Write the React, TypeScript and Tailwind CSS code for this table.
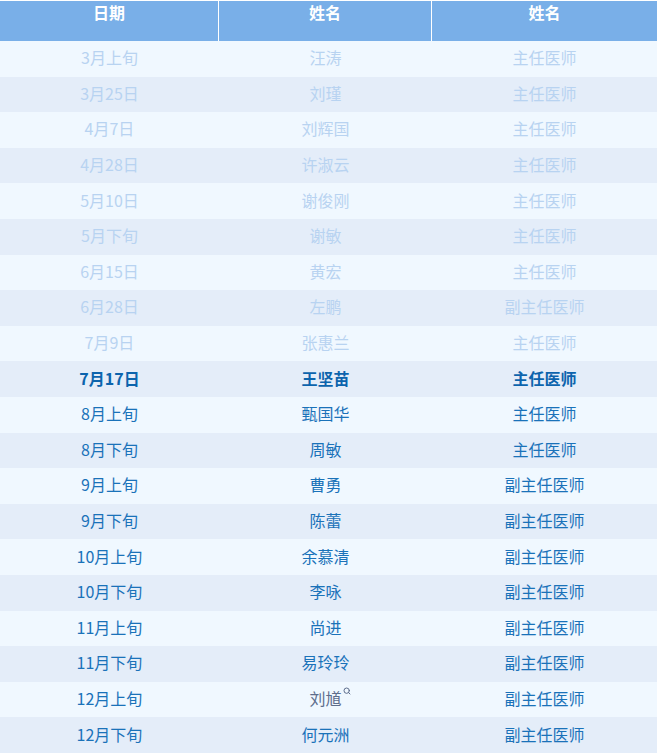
import { Search } from "lucide-react";

type Row = { date: string; name: string; title: string; state: "past" | "current" | "future" };

const rows: Row[] = [
  { date: "3月上旬", name: "汪涛", title: "主任医师", state: "past" },
  { date: "3月25日", name: "刘瑾", title: "主任医师", state: "past" },
  { date: "4月7日", name: "刘辉国", title: "主任医师", state: "past" },
  { date: "4月28日", name: "许淑云", title: "主任医师", state: "past" },
  { date: "5月10日", name: "谢俊刚", title: "主任医师", state: "past" },
  { date: "5月下旬", name: "谢敏", title: "主任医师", state: "past" },
  { date: "6月15日", name: "黄宏", title: "主任医师", state: "past" },
  { date: "6月28日", name: "左鹏", title: "副主任医师", state: "past" },
  { date: "7月9日", name: "张惠兰", title: "主任医师", state: "past" },
  { date: "7月17日", name: "王坚苗", title: "主任医师", state: "current" },
  { date: "8月上旬", name: "甄国华", title: "主任医师", state: "future" },
  { date: "8月下旬", name: "周敏", title: "主任医师", state: "future" },
  { date: "9月上旬", name: "曹勇", title: "副主任医师", state: "future" },
  { date: "9月下旬", name: "陈蕾", title: "副主任医师", state: "future" },
  { date: "10月上旬", name: "余慕清", title: "副主任医师", state: "future" },
  { date: "10月下旬", name: "李咏", title: "副主任医师", state: "future" },
  { date: "11月上旬", name: "尚进", title: "副主任医师", state: "future" },
  { date: "11月下旬", name: "易玲玲", title: "副主任医师", state: "future" },
  { date: "12月上旬", name: "刘馗", title: "副主任医师", state: "future" },
  { date: "12月下旬", name: "何元洲", title: "副主任医师", state: "future" },
];

const textClass = {
  past: "text-[#b8d3f1]",
  current: "text-[#0c64ad] font-bold",
  future: "text-[#1a72b9]",
};

export default function App() {
  return (
    <div
      className="w-[657px] h-[753px] bg-white pt-px overflow-hidden"
      style={{ fontFamily: '"Noto Sans CJK SC", "Noto Sans", sans-serif' }}
    >
      {/* Header */}
      <div className="flex h-[40px] bg-[#79afe8] text-white text-[16px] leading-[20px] font-bold">
        <div className="w-[219px] flex justify-center pt-[1px] border-r border-white">日期</div>
        <div className="w-[213px] flex justify-center pt-[1px] border-r border-white">姓名</div>
        <div className="flex-1 flex justify-center pt-[1px]">姓名</div>
      </div>

      {rows.map((r, i) => (
        <div
          key={r.date}
          className={`flex h-[35.6px] pb-[3px] text-[16px] ${i % 2 === 0 ? "bg-[#f0f8ff]" : "bg-[#e4edf9]"} ${textClass[r.state]}`}
        >
          <div className="w-[219px] flex items-center justify-center">{r.date}</div>
          <div className="w-[213px] flex items-center justify-center">
            {r.name === "刘馗" ? (
              <span className="relative text-[#5d6d8c]">
                {r.name}
                <Search className="absolute -right-[9px] top-[1px] w-[8px] h-[8px]" strokeWidth={3} />
              </span>
            ) : (
              r.name
            )}
          </div>
          <div className="flex-1 flex items-center justify-center">{r.title}</div>
        </div>
      ))}
    </div>
  );
}
